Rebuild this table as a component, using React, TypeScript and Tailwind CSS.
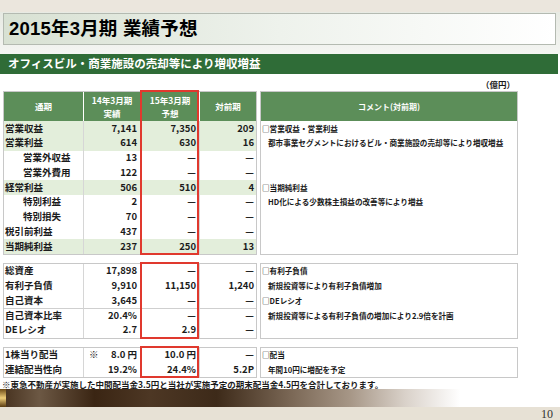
import React from 'react';

type Row = {
  l: string;
  a: string;
  b: string;
  c: string;
  hl?: boolean;
  sub?: boolean;
  line?: boolean;
  mark?: boolean;
};
type Note = { t: string; sub?: boolean } | null;

const plRows: Row[] = [
  { l: '営業収益', a: '7,141', b: '7,350', c: '209', hl: true },
  { l: '営業利益', a: '614', b: '630', c: '16', hl: true },
  { l: '営業外収益', a: '13', b: '—', c: '—', sub: true },
  { l: '営業外費用', a: '122', b: '—', c: '—', sub: true },
  { l: '経常利益', a: '506', b: '510', c: '4', hl: true },
  { l: '特別利益', a: '2', b: '—', c: '—', sub: true },
  { l: '特別損失', a: '70', b: '—', c: '—', sub: true },
  { l: '税引前利益', a: '437', b: '—', c: '—' },
  { l: '当期純利益', a: '237', b: '250', c: '13', hl: true },
];

const plNotes: Note[] = [
  { t: '□営業収益・営業利益' },
  { t: '都市事業セグメントにおけるビル・商業施設の売却等により増収増益', sub: true },
  null,
  null,
  { t: '□当期純利益' },
  { t: 'HD化による少数株主損益の改善等により増益', sub: true },
  null,
  null,
  null,
];

const bsRows: Row[] = [
  { l: '総資産', a: '17,898', b: '—', c: '—' },
  { l: '有利子負債', a: '9,910', b: '11,150', c: '1,240' },
  { l: '自己資本', a: '3,645', b: '—', c: '—' },
  { l: '自己資本比率', a: '20.4%', b: '—', c: '—', line: true },
  { l: 'DEレシオ', a: '2.7', b: '2.9', c: '—' },
];

const bsNotes: Note[] = [
  { t: '□有利子負債' },
  { t: '新規投資等により有利子負債増加', sub: true },
  { t: '□DEレシオ' },
  { t: '新規投資等による有利子負債の増加により2.9倍を計画', sub: true },
  null,
];

const divRows: Row[] = [
  { l: '1株当り配当', a: '8.0 円', b: '10.0 円', c: '—', mark: true },
  { l: '連結配当性向', a: '19.2%', b: '24.4%', c: '5.2P' },
];

const divNotes: Note[] = [{ t: '□配当' }, { t: '年間10円に増配を予定', sub: true }];

const cell = 'h-[14.75px] flex items-center text-[9.5px] font-bold leading-none text-[#1b1b1b] whitespace-nowrap';

const NumTable: React.FC<{ rows: Row[]; header?: boolean }> = ({ rows, header }) => (
  <div className="relative w-[254px] border border-[#c8c8c8] bg-white">
    <div className="grid grid-cols-[79px_57px_59px_57px]">
      {header && (
        <>
          <div className="h-[29px] bg-[#5c8e59] flex items-center justify-center text-white text-[8.5px] font-bold">通期</div>
          <div className="h-[29px] bg-[#5c8e59] border-l border-white flex flex-col items-center justify-center text-white text-[8.5px] font-bold leading-[13px]">
            <span>14年3月期</span>
            <span>実績</span>
          </div>
          <div className="h-[29px] bg-[#5c8e59] border-l border-white flex flex-col items-center justify-center text-white text-[8.5px] font-bold leading-[13px]">
            <span>15年3月期</span>
            <span>予想</span>
          </div>
          <div className="h-[29px] bg-[#5c8e59] border-l border-white flex items-center justify-center text-white text-[8.5px] font-bold">対前期</div>
        </>
      )}
      {rows.map((r) => {
        const bg = r.hl ? 'bg-[#e3eedb]' : 'bg-white';
        const top = r.line ? 'border-t border-t-[#cfcfcf]' : '';
        return (
          <React.Fragment key={r.l}>
            <div className={`${cell} ${bg} ${top} ${r.sub ? 'pl-[19px]' : 'pl-[1px]'}`}>{r.l}</div>
            <div className={`${cell} ${bg} ${top} border-l border-l-[#d6d6d6] pr-[3px] ${r.mark ? 'justify-between pl-[5px]' : 'justify-end'}`}>
              {r.mark && <span>※</span>}
              <span>{r.a}</span>
            </div>
            <div className={`${cell} ${bg} ${top} justify-end pr-[3px]`}>{r.b}</div>
            <div className={`${cell} ${bg} ${top} border-l border-l-[#d6d6d6] justify-end pr-[2px]`}>{r.c}</div>
          </React.Fragment>
        );
      })}
    </div>
    {/* forecast highlight */}
    <div className="absolute top-[-2px] bottom-[-1px] left-[136px] w-[59px] border-2 border-[#e0392e] pointer-events-none" />
  </div>
);

const NoteTable: React.FC<{ notes: Note[]; header?: boolean }> = ({ notes, header }) => (
  <div className="w-[258px] border border-[#c8c8c8] bg-white">
    {header && (
      <div className="h-[29px] bg-[#5c8e59] flex items-center justify-center text-white text-[8px] font-bold">
        コメント(対前期)
      </div>
    )}
    {notes.map((n, i) => (
      <div
        key={i}
        className={`h-[14.75px] flex items-center text-[7.6px] font-bold leading-none text-[#1b1b1b] whitespace-nowrap ${n?.sub ? 'pl-[7px]' : 'pl-[1px]'}`}
      >
        {n?.t}
      </div>
    ))}
  </div>
);

export default function App() {
  return (
    <div className="w-[560px] h-[420px] overflow-hidden bg-white flex flex-col font-['Noto_Sans_CJK_JP',sans-serif]">
      {/* top strip */}
      <div className="h-[12px] shrink-0 bg-[#ebe6dd]" />

      {/* title */}
      <div className="h-[42px] shrink-0 bg-gradient-to-b from-[#e7eae3] to-[#f4f5f2] pl-[3px] pr-[4px] pt-[1px]">
        <div className="h-[32px] border border-[#b4bab1] bg-gradient-to-r from-[#d8e1d3] via-[#eef2ec] to-white flex items-center pl-[5px]">
          <span className="text-[18.5px] font-bold text-black font-['Liberation_Sans','Noto_Sans_CJK_JP',sans-serif] tracking-[0.2px]">
            2015年3月期 業績予想
          </span>
        </div>
      </div>

      {/* sub headline */}
      <div className="h-[20px] shrink-0 bg-[#2f6c37] mr-[2px] flex items-center pl-[8px]">
        <span className="text-white text-[11.5px] font-bold">オフィスビル・商業施設の売却等により増収増益</span>
      </div>

      {/* unit */}
      <div className="h-[17px] shrink-0 flex items-center justify-end pr-[45px] pt-[3px]">
        <span className="text-[8.5px] font-bold text-[#1b1b1b]">（億円）</span>
      </div>

      {/* tables */}
      <div className="flex flex-col gap-[8px] pl-[3px]">
        <div className="flex gap-[3px]">
          <NumTable rows={plRows} header />
          <NoteTable notes={plNotes} header />
        </div>
        <div className="flex gap-[3px]">
          <NumTable rows={bsRows} />
          <NoteTable notes={bsNotes} />
        </div>
        <div className="flex gap-[3px]">
          <NumTable rows={divRows} />
          <NoteTable notes={divNotes} />
        </div>
      </div>

      {/* footnote */}
      <div className="flex-1 flex items-end pl-[2px] overflow-hidden">
        <span className="text-[8.5px] font-bold leading-[10px] text-[#1b1b1b] whitespace-nowrap">
          ※東急不動産が実施した中間配当金3.5円と当社が実施予定の期末配当金4.5円を合計しております。
        </span>
      </div>

      {/* footer band */}
      <div className="h-[18px] shrink-0 flex">
        <div className="w-[6px] bg-gradient-to-b from-[#6e4c15] via-[#f0cf7a] to-[#5a3c10]" />
        <div className="flex-1 bg-[linear-gradient(to_right,#4a3522_0%,#6c5844_6%,#3a2513_16%,#4d3724_26%,#3d2a19_38%,#7d6a58_52%,#a69686_62%,#d9d1c9_72%,#ffffff_82%)]" />
      </div>
      <div className="h-[13px] shrink-0 bg-[#e7e1d5] flex items-center justify-end pr-[7px]">
        <span className="text-[12px] leading-none text-[#333] font-['Liberation_Serif',serif]">10</span>
      </div>
    </div>
  );
}
